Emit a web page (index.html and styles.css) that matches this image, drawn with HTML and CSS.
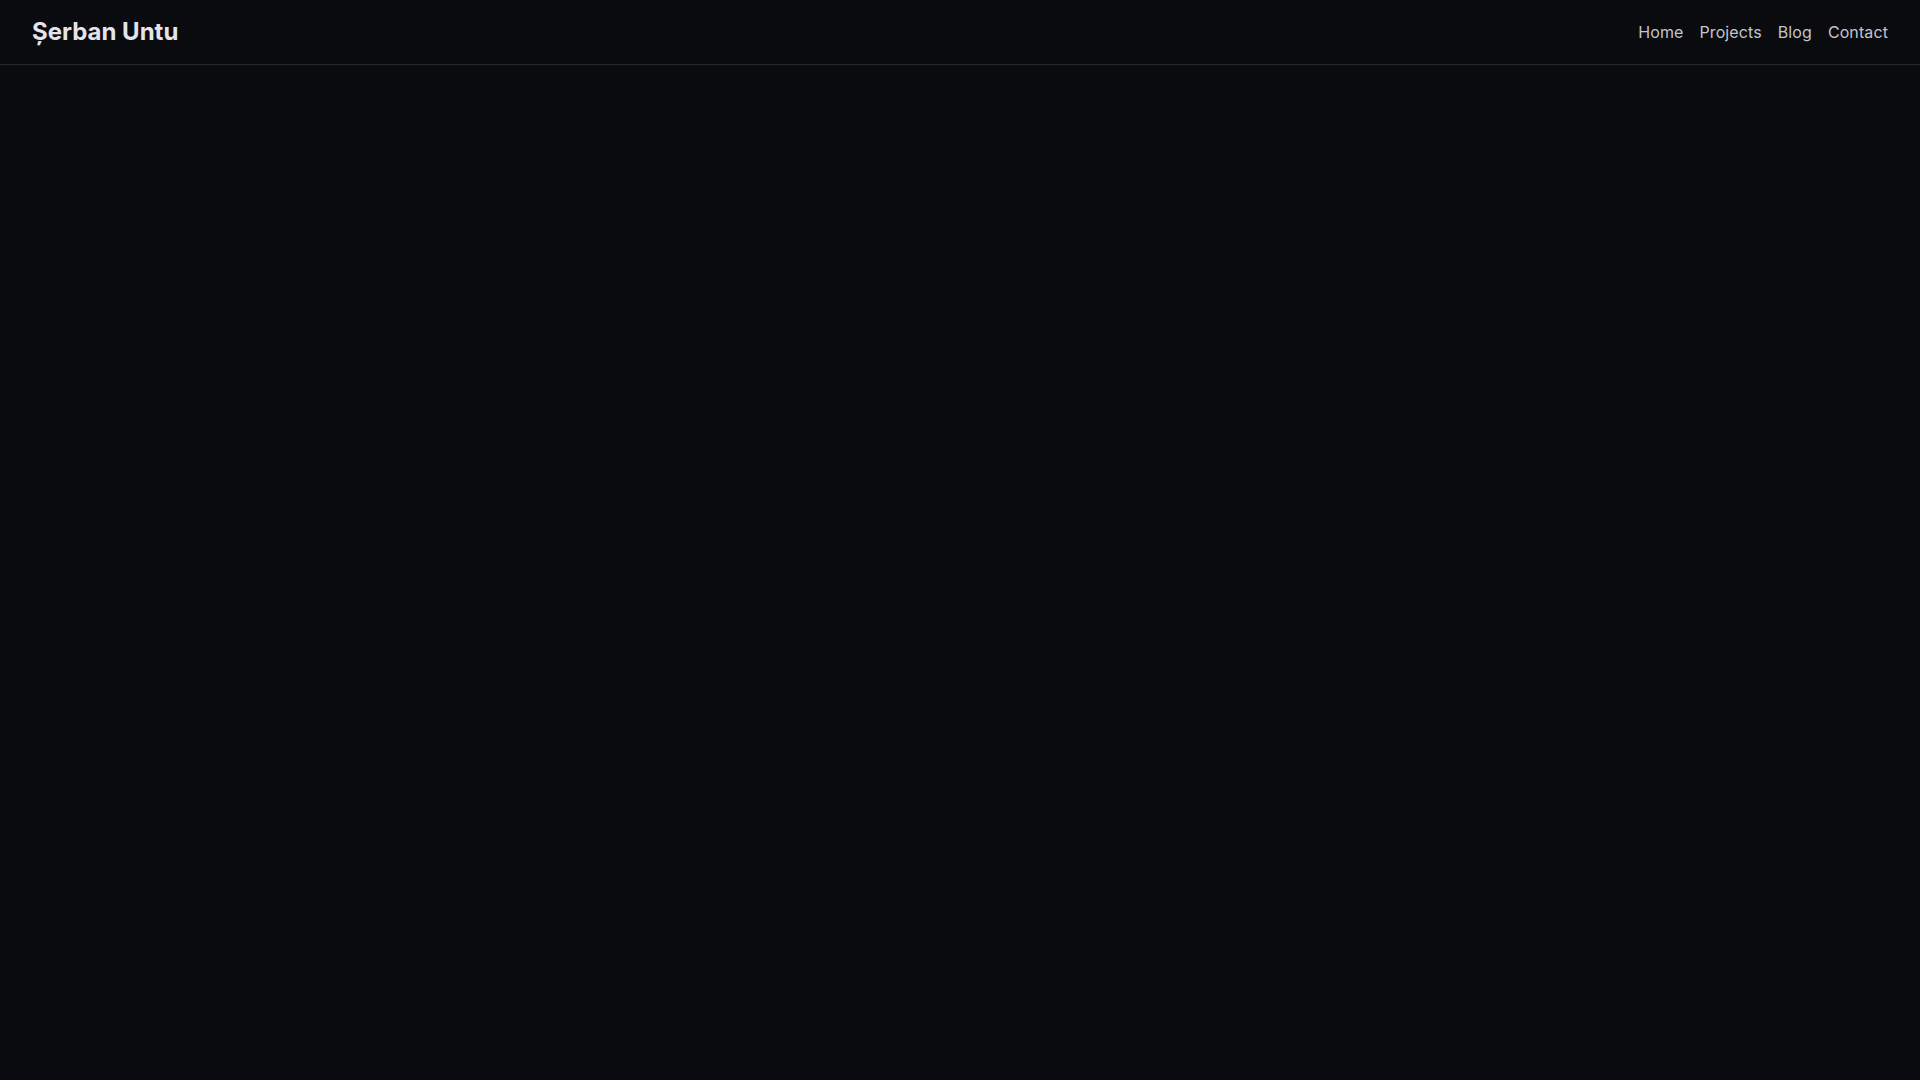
FILE: index.html
```html
<!DOCTYPE html>
<html lang="ro">
<head>
<meta charset="utf-8">
<title>Șerban Untu</title>
<link rel="stylesheet" href="styles.css">
</head>
<body>
<header class="site-header">
  <a class="brand" href="#">Șerban Untu</a>
  <nav class="nav">
    <a href="#">Home</a>
    <a href="#">Projects</a>
    <a href="#">Blog</a>
    <a href="#">Contact</a>
  </nav>
</header>
<main class="content"></main>
</body>
</html>
```
FILE: styles.css
```css
html, body {
  margin: 0;
  padding: 0;
  background: #0a0b0f;
  min-height: 100%;
}
body {
  font-family: Inter, "Noto Sans", sans-serif;
  color: #e4e4e7;
}
.site-header {
  height: 64px;
  display: flex;
  align-items: center;
  justify-content: space-between;
  padding: 0 32px;
  border-bottom: 1px solid #27272a;
}
.brand {
  font-size: 24px;
  font-weight: 700;
  line-height: 1;
  color: #e4e4ea;
  text-decoration: none;
}
.nav {
  display: flex;
  gap: 16px;
}
.nav a {
  font-size: 16px;
  color: #c4c4cc;
  text-decoration: none;
  letter-spacing: 0.1px;
}
.content {
  min-height: calc(100vh - 65px);
}
```
